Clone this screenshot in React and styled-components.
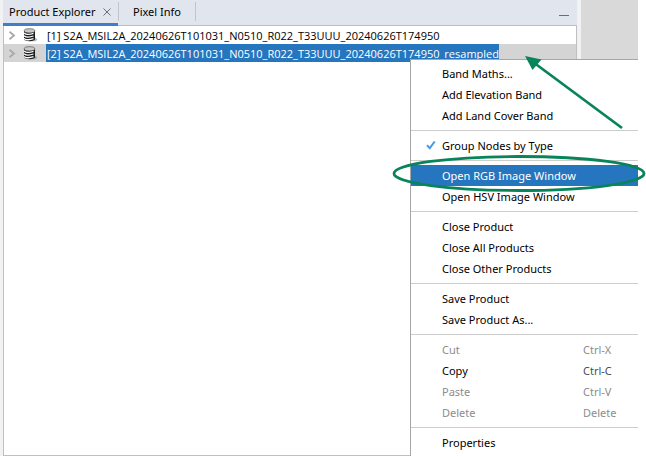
import React from "react";
import styled, { createGlobalStyle, css } from "styled-components";

const GlobalStyle = createGlobalStyle`
  * { box-sizing: border-box; }
  body {
    margin: 0;
    background: #ffffff;
    color: #000000;
    font-family: "Noto Sans", "Open Sans", sans-serif;
    font-size: 11px;
    line-height: 18px;
    overflow: hidden;
  }
  button {
    margin: 0;
    padding: 0;
    border: 0;
    background: none;
    color: inherit;
    font: inherit;
    text-align: left;
  }
  svg { flex-shrink: 0; }
`;

const Desktop = styled.main`
  position: relative;
  display: flex;
  min-height: 100vh;
  margin-right: 8px;
  background: #d9d9d9;
`;

const Explorer = styled.section`
  flex: 1;
  display: flex;
  flex-direction: column;
  min-width: 0;
  padding-left: 3px;
  padding-right: 4px;
  background: #f2f2f2;
`;

const Workspace = styled.div`
  width: 57px;
`;

const TabBar = styled.header`
  display: flex;
  height: 25px;
  background: #e1e5ee;
`;

const Tab = styled.button`
  display: flex;
  align-items: center;
  justify-content: space-between;
  height: 26px;
  padding-bottom: 2px;
  white-space: nowrap;
  ${(p) =>
    p.$active
      ? css`
          position: relative;
          width: 115px;
          padding-left: 6px;
          padding-right: 7px;
          box-shadow: inset 0 -3px #3f7fca;
        `
      : css`
          width: 76px;
          padding-left: 14px;
        `}
`;

const TabDivider = styled.span`
  width: 1px;
  height: 19px;
  margin-top: 2px;
  background: #c0c4cc;
`;

const Minimize = styled.button`
  display: flex;
  align-items: center;
  justify-content: center;
  width: 26px;
  height: 25px;
  margin-left: auto;
  padding-top: 6px;
`;

const Tree = styled.div`
  flex: 1;
  border: 1px solid #bfbfbf;
  background: #ffffff;
`;

const Row = styled.div`
  display: flex;
  align-items: center;
  height: 18px;
  background: ${(p) => (p.$selected ? "#d4d4d4" : "#ffffff")};
`;

const Toggle = styled.button`
  display: flex;
  width: 18px;
  padding-left: 4px;
`;

const RowIcon = styled.span`
  display: flex;
  width: 24px;
`;

const RowLabel = styled.span`
  height: 18px;
  padding-left: 1px;
  font-family: "Open Sans", "Noto Sans", sans-serif;
  line-height: 19px;
  white-space: nowrap;
  color: ${(p) => (p.$selected ? "#ffffff" : "#000000")};
  background: ${(p) => (p.$selected ? "#2675bf" : "transparent")};
`;

const Menu = styled.div`
  position: absolute;
  top: 59px;
  left: 410px;
  right: 0;
  padding: 3px 0;
  border: 1px solid #a6a6a6;
  border-right: 0;
  border-bottom: 0;
  background: #ffffff;
`;

const MenuItem = styled.button`
  display: grid;
  grid-template-columns: 31px 141px 1fr;
  align-items: center;
  width: 100%;
  height: 21px;
  line-height: 21px;
  white-space: nowrap;
  color: ${(p) => (p.$active ? "#ffffff" : "#000000")};
  background: ${(p) => (p.$active ? "#2675bf" : "transparent")};
  &:disabled { color: #8c8c8c; }
`;

const CheckCell = styled.span`
  display: flex;
  justify-content: flex-end;
  padding-right: 6px;
`;

const Shortcut = styled.span`
  color: ${(p) => (p.$disabled ? "#8c8c8c" : "#4d4d4d")};
`;

const Separator = styled.hr`
  height: 1px;
  margin: 4px 0;
  border: 0;
  background: #cdcdcd;
`;

const Annotation = styled.svg`
  position: absolute;
  top: 0;
  left: 390px;
  pointer-events: none;
`;

const products = [
  { name: "[1] S2A_MSIL2A_20240626T101031_N0510_R022_T33UUU_20240626T174950" },
  {
    name: "[2] S2A_MSIL2A_20240626T101031_N0510_R022_T33UUU_20240626T174950_resampled",
    selected: true,
  },
];

const menuGroups = [
  [{ label: "Band Maths..." }, { label: "Add Elevation Band" }, { label: "Add Land Cover Band" }],
  [{ label: "Group Nodes by Type", checked: true }],
  [{ label: "Open RGB Image Window", active: true }, { label: "Open HSV Image Window" }],
  [{ label: "Close Product" }, { label: "Close All Products" }, { label: "Close Other Products" }],
  [{ label: "Save Product" }, { label: "Save Product As..." }],
  [
    { label: "Cut", shortcut: "Ctrl-X", disabled: true },
    { label: "Copy", shortcut: "Ctrl-C" },
    { label: "Paste", shortcut: "Ctrl-V", disabled: true },
    { label: "Delete", shortcut: "Delete", disabled: true },
  ],
  [{ label: "Properties" }],
];

function CloseIcon() {
  return (
    <svg width="8" height="8" viewBox="0 0 8 8" aria-hidden="true">
      <path d="M.5.5l7 7M7.5.5l-7 7" stroke="#6b6d72" fill="none" />
    </svg>
  );
}

function ChevronIcon() {
  return (
    <svg width="8" height="9" viewBox="0 0 8 9" aria-hidden="true">
      <path d="M1.5 .8L6 4.5 1.5 8.2" stroke="#a9a9a9" strokeWidth="1.8" fill="none" />
    </svg>
  );
}

function ProductIcon() {
  return (
    <svg width="16" height="14" viewBox="0 0 16 14" aria-hidden="true">
      <path d="M12 8.500l3.500 3-2 1.800H8z" fill="#888" opacity=".6" />
      <path d="M2 3v8c0 1.300 2.200 2.200 5.500 2.200S13 12.300 13 11V3z" fill="#1c1c1c" />
      <path
        d="M2 5c1.500 1.300 5.500 1.700 9.500 .3M2 7.700c1.500 1.300 5.500 1.700 9.500 .3M2 10.400c1.500 1.300 5.500 1.700 9.500 .3"
        stroke="#ffffff"
        strokeWidth="1.300"
        fill="none"
      />
      <ellipse cx="7.500" cy="2.800" rx="5.300" ry="2.100" fill="#c8c8c8" stroke="#555" strokeWidth=".7" />
    </svg>
  );
}

function CheckIcon() {
  return (
    <svg width="10" height="10" viewBox="0 0 10 10" aria-hidden="true">
      <path d="M1 4.200L3.800 7.200 8.700 .5" stroke="#4a9be6" strokeWidth="2" fill="none" />
    </svg>
  );
}

export default function App() {
  return (
    <>
      <GlobalStyle />
      <Desktop>
        <Explorer>
          <TabBar role="tablist">
            <Tab role="tab" aria-selected="true" $active>
              Product Explorer
              <CloseIcon />
            </Tab>
            <TabDivider />
            <Tab role="tab" aria-selected="false">
              Pixel Info
            </Tab>
            <TabDivider />
            <Minimize aria-label="Minimize">
              <svg width="10" height="1" viewBox="0 0 10 1" aria-hidden="true">
                <rect width="10" height="1" fill="#6b6d72" />
              </svg>
            </Minimize>
          </TabBar>
          <Tree role="tree">
            {products.map((p) => (
              <Row key={p.name} role="treeitem" aria-selected={!!p.selected} $selected={p.selected}>
                <Toggle aria-label="Expand">
                  <ChevronIcon />
                </Toggle>
                <RowIcon>
                  <ProductIcon />
                </RowIcon>
                <RowLabel $selected={p.selected}>{p.name}</RowLabel>
              </Row>
            ))}
          </Tree>
        </Explorer>
        <Workspace />
        <Menu role="menu">
          {menuGroups.map((group, i) => (
            <React.Fragment key={group[0].label}>
              {i > 0 && <Separator />}
              {group.map((item) => (
                <MenuItem
                  key={item.label}
                  role={item.checked ? "menuitemcheckbox" : "menuitem"}
                  aria-checked={item.checked}
                  disabled={item.disabled}
                  $active={item.active}
                >
                  <CheckCell>{item.checked && <CheckIcon />}</CheckCell>
                  <span>{item.label}</span>
                  {item.shortcut && <Shortcut $disabled={item.disabled}>{item.shortcut}</Shortcut>}
                </MenuItem>
              ))}
            </React.Fragment>
          ))}
        </Menu>
        <Annotation width="256" height="200" viewBox="390 0 256 200" aria-hidden="true">
          <ellipse cx="519" cy="173.500" rx="125" ry="17" stroke="#08845a" strokeWidth="2.800" fill="none" />
          <path d="M535 63.500L622 128" stroke="#08845a" strokeWidth="2.800" />
          <path d="M525 56l16.500 3.500L532.500 70z" fill="#08845a" />
        </Annotation>
      </Desktop>
    </>
  );
}
